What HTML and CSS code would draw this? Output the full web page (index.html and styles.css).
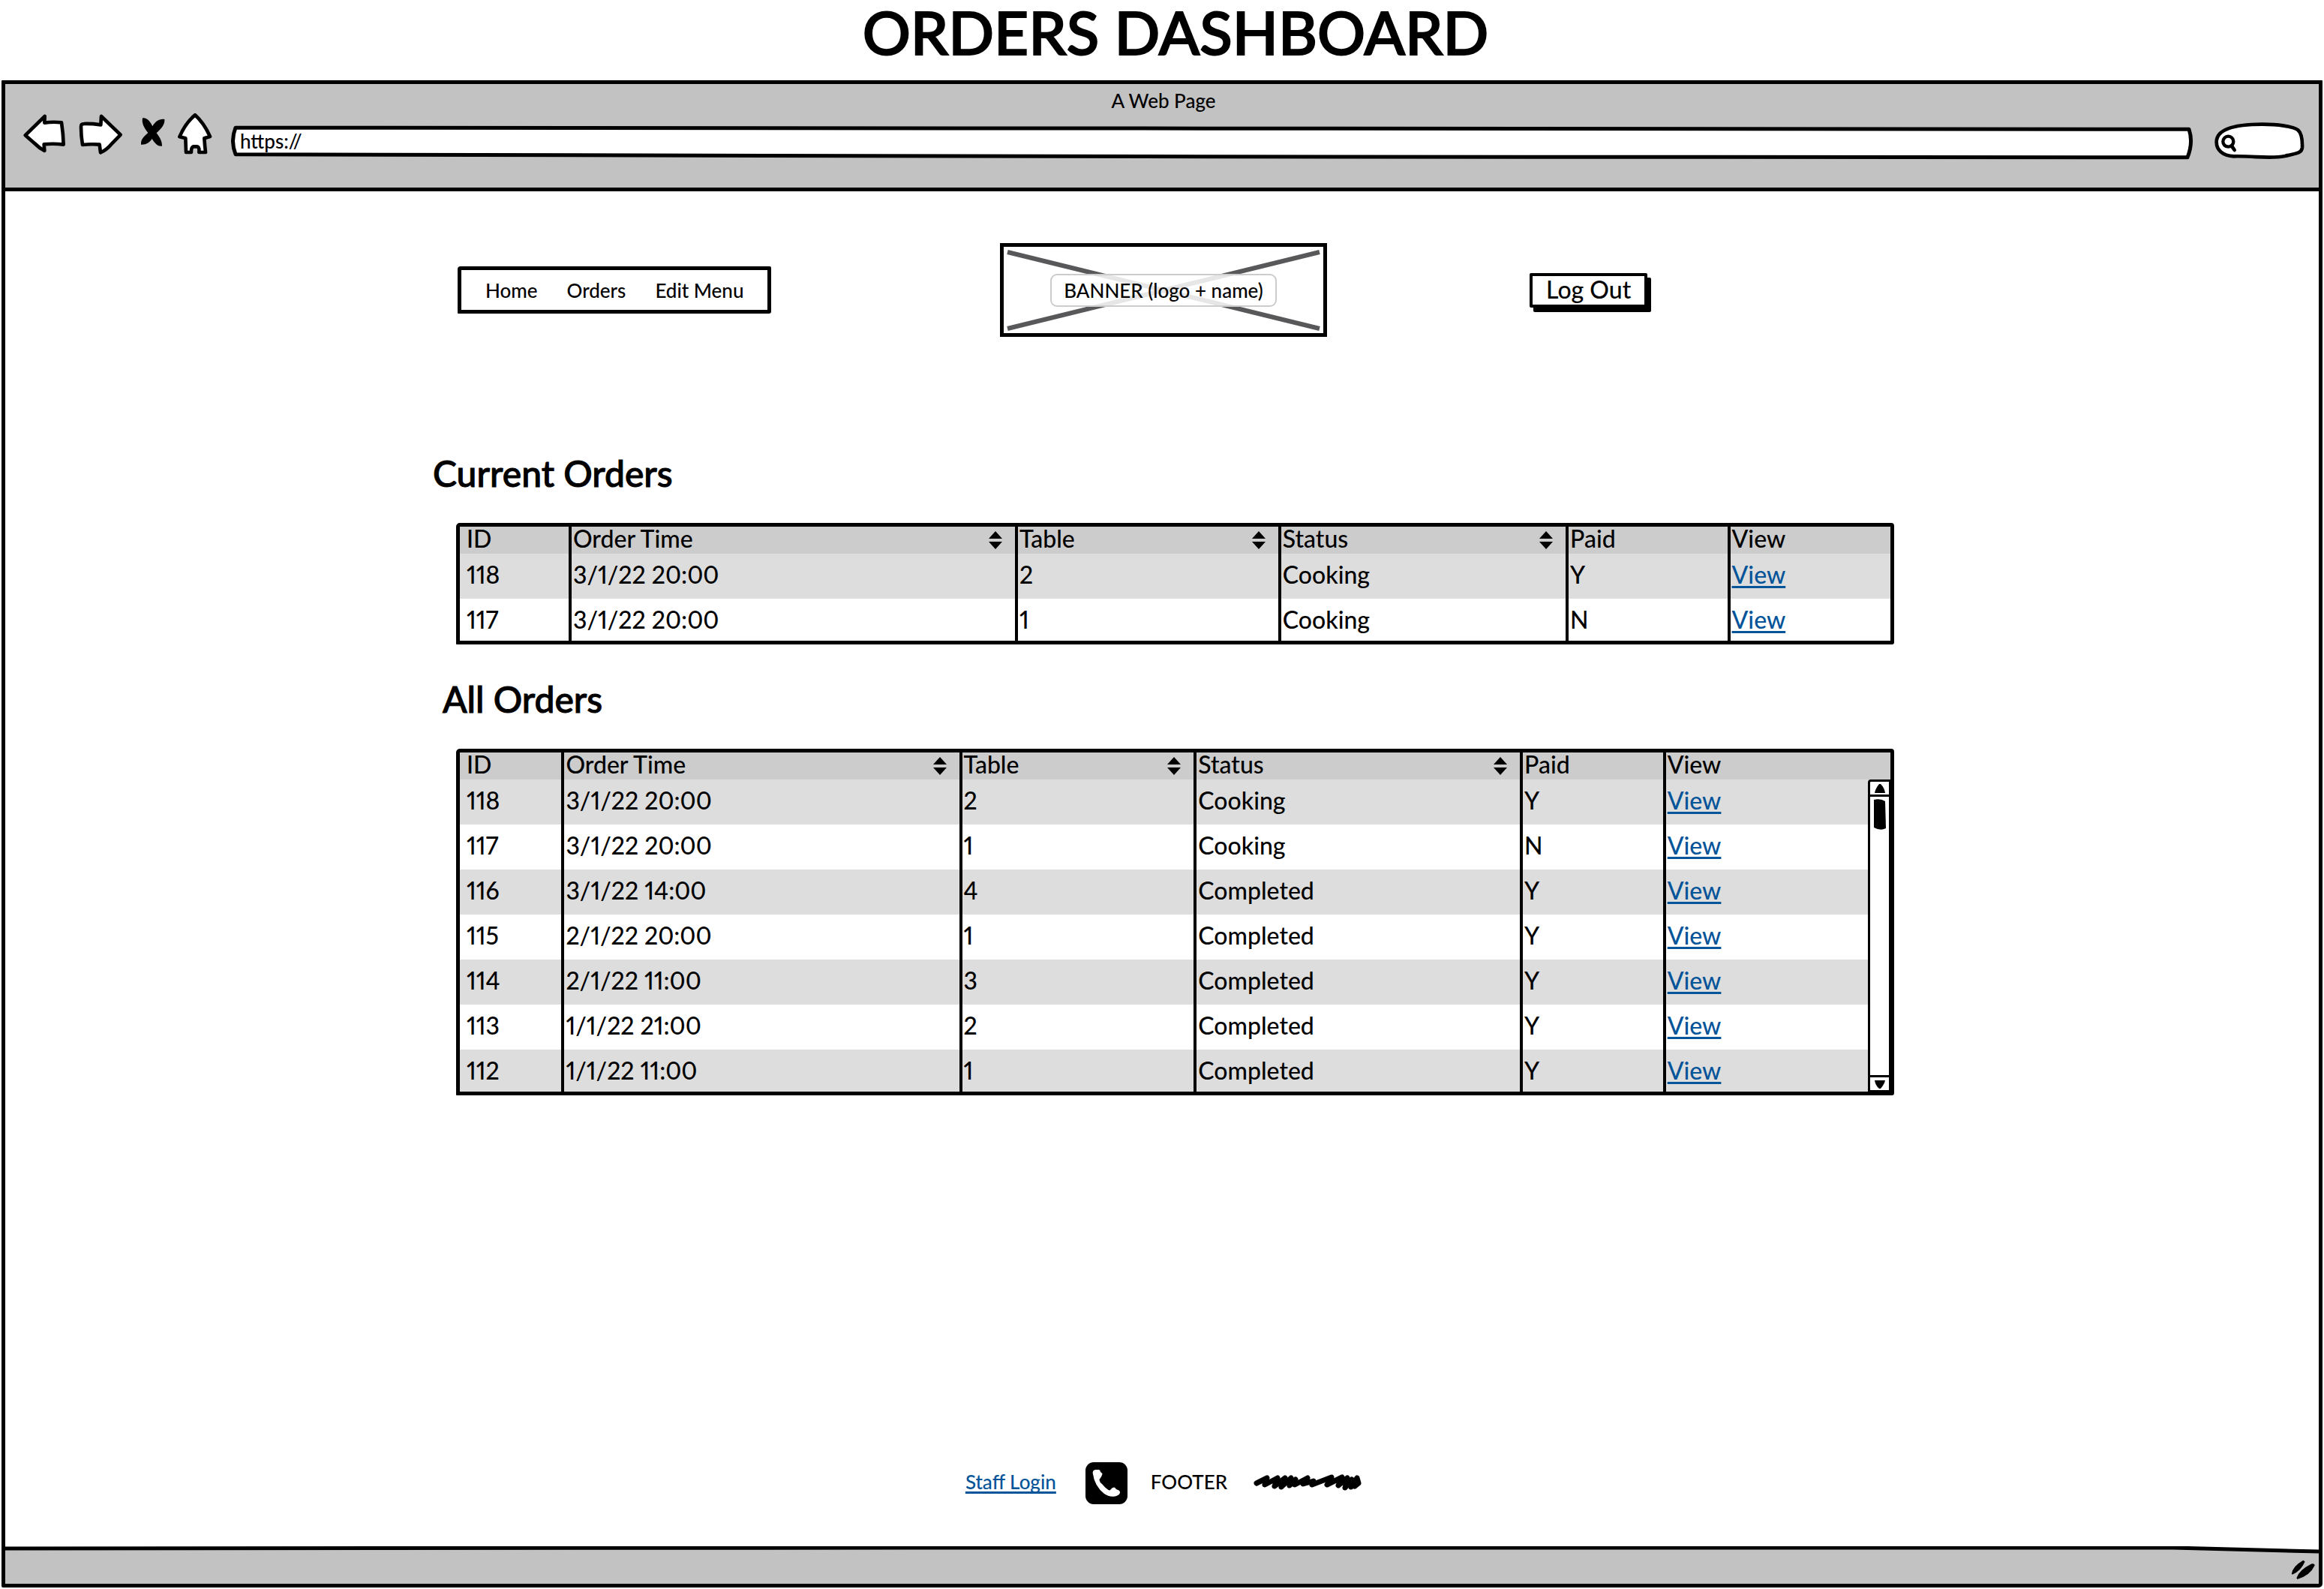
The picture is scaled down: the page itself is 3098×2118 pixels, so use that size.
FILE: index.html
```html
<!DOCTYPE html>
<html lang="en">
<head>
<meta charset="utf-8">
<title>Orders Dashboard</title>
<link rel="stylesheet" href="styles.css">
</head>
<body>
<h1 class="page-title">ORDERS DASHBOARD</h1>
<div class="browser">
  <div class="chrome">
    <div class="chrome-title">A Web Page</div>
    <div class="toolbar">
      <button class="tool tool-back" aria-label="Back"><svg width="58" height="56" viewBox="90 186 174 168"><path class="ink" d="M101 274L179 198L178 224Q212 219 246 223Q253 268 254 311Q214 306 176 310L178 336Q158 326 138 306Z"/></svg></button>
      <button class="tool tool-forward" aria-label="Forward"><svg width="60" height="56" viewBox="312 186 180 168"><path class="ink" d="M482 272L405 198L403 232Q365 227 336 228Q323 228 324 240Q324 275 330 312Q364 308 398 311L402 343Q425 333 444 311Z"/></svg></button>
      <button class="tool tool-stop" aria-label="Stop"><svg width="33" height="56" viewBox="561 186 99 168"><path d="M570 205C588 202 602 220 610 238C620 218 640 206 658 210C660 232 644 248 626 265C640 284 648 296 648 317C630 320 617 303 608 288C598 304 582 313 564 311C563 290 574 280 592 264C576 244 566 226 570 205Z"/></svg></button>
      <button class="tool tool-home" aria-label="Home"><svg width="47" height="56" viewBox="708 186 141 168"><path class="ink" d="M780 193Q815 224 840 279L817 286Q819 315 822 342L796 342Q798 320 788 319L774 319Q764 322 765 342L744 342L742 286L718 280Q742 224 780 193Z"/></svg></button>
      <div class="address">
        <svg class="backdrop" viewBox="0 0 2617 44" preserveAspectRatio="none"><path class="ink-wide" d="M6 3L1300 4L2611 5Q2617 22 2609 41L1300 40L6 37Q-1 20 6 3Z"/></svg>
        <input class="address-input" type="text" aria-label="Address" value="https://">
      </div>
      <div class="search">
        <svg class="backdrop" viewBox="278 219 360 150"><path class="ink" d="M286 298C286 250 350 227 470 227C530 227 590 235 612 250C625 262 630 290 629 320C627 345 600 343 560 354C500 366 440 353 355 355C310 352 286 330 286 298Z"/><circle class="lens" cx="333" cy="296" r="21"/><path class="ink" d="M347 314L358 330"/></svg>
        <input class="search-input" type="search" aria-label="Search">
      </div>
    </div>
  </div>

  <div class="page">
    <header class="site-header">
      <nav class="menu">
        <a href="#home">Home</a>
        <a href="#orders">Orders</a>
        <a href="#menu">Edit Menu</a>
      </nav>
      <div class="banner">
        <svg class="backdrop" viewBox="0 0 425 115" preserveAspectRatio="none"><path class="cross" d="M5 7L420 109M5 109L420 7"/></svg>
        <span class="banner-label">BANNER (logo + name)</span>
      </div>
      <button class="logout">Log Out</button>
    </header>

    <main class="content">
      <h2 class="heading" id="current">Current Orders</h2>
      <div class="grid-frame">
        <table class="orders" aria-labelledby="current">
          <colgroup><col class="c-id"><col class="c-time"><col class="c-table"><col class="c-status"><col class="c-paid"><col></colgroup>
          <thead><tr>
            <th>ID</th>
            <th class="sortable">Order Time<svg class="sort" viewBox="0 0 18 24"><path d="M9 0L18 10H0ZM0 14H18L9 24Z"/></svg></th>
            <th class="sortable">Table<svg class="sort" viewBox="0 0 18 24"><path d="M9 0L18 10H0ZM0 14H18L9 24Z"/></svg></th>
            <th class="sortable">Status<svg class="sort" viewBox="0 0 18 24"><path d="M9 0L18 10H0ZM0 14H18L9 24Z"/></svg></th>
            <th>Paid</th><th>View</th>
          </tr></thead>
          <tbody>
            <tr><td>118</td><td>3/1/22 20:00</td><td>2</td><td>Cooking</td><td>Y</td><td><a class="link" href="#118">View</a></td></tr>
            <tr><td>117</td><td>3/1/22 20:00</td><td>1</td><td>Cooking</td><td>N</td><td><a class="link" href="#117">View</a></td></tr>
          </tbody>
        </table>
      </div>

      <h2 class="heading heading-all" id="all">All Orders</h2>
      <div class="grid-frame">
        <table class="orders orders-all" aria-labelledby="all">
          <colgroup><col class="c-id"><col class="c-time"><col class="c-table"><col class="c-status"><col class="c-paid"><col></colgroup>
          <thead><tr>
            <th>ID</th>
            <th class="sortable">Order Time<svg class="sort" viewBox="0 0 18 24"><path d="M9 0L18 10H0ZM0 14H18L9 24Z"/></svg></th>
            <th class="sortable">Table<svg class="sort" viewBox="0 0 18 24"><path d="M9 0L18 10H0ZM0 14H18L9 24Z"/></svg></th>
            <th class="sortable">Status<svg class="sort" viewBox="0 0 18 24"><path d="M9 0L18 10H0ZM0 14H18L9 24Z"/></svg></th>
            <th>Paid</th><th>View</th>
          </tr></thead>
          <tbody>
            <tr><td>118</td><td>3/1/22 20:00</td><td>2</td><td>Cooking</td><td>Y</td><td><a class="link" href="#118">View</a></td></tr>
            <tr><td>117</td><td>3/1/22 20:00</td><td>1</td><td>Cooking</td><td>N</td><td><a class="link" href="#117">View</a></td></tr>
            <tr><td>116</td><td>3/1/22 14:00</td><td>4</td><td>Completed</td><td>Y</td><td><a class="link" href="#116">View</a></td></tr>
            <tr><td>115</td><td>2/1/22 20:00</td><td>1</td><td>Completed</td><td>Y</td><td><a class="link" href="#115">View</a></td></tr>
            <tr><td>114</td><td>2/1/22 11:00</td><td>3</td><td>Completed</td><td>Y</td><td><a class="link" href="#114">View</a></td></tr>
            <tr><td>113</td><td>1/1/22 21:00</td><td>2</td><td>Completed</td><td>Y</td><td><a class="link" href="#113">View</a></td></tr>
            <tr><td>112</td><td>1/1/22 11:00</td><td>1</td><td>Completed</td><td>Y</td><td><a class="link" href="#112">View</a></td></tr>
          </tbody>
        </table>
        <div class="scrollbar">
          <button class="scroll-step" aria-label="Scroll up"><svg width="16" height="12" viewBox="0 0 16 12"><path d="M7 0H9Q14 5 15 12H1Q2 6 7 0Z"/></svg></button>
          <div class="scroll-track"><svg width="16" height="41" viewBox="0 0 16 41"><path d="M0 1Q9 -1 15 3L16 39Q9 43 0 38Z"/></svg></div>
          <button class="scroll-step scroll-down" aria-label="Scroll down"><svg width="16" height="12" viewBox="0 0 16 12"><path d="M1 1H15Q14 6 9 12H7Q2 8 1 1Z"/></svg></button>
        </div>
      </div>
    </main>

    <footer class="site-footer">
      <a class="link" href="#staff">Staff Login</a>
      <svg class="phone" width="56" height="56" viewBox="0 0 56 56"><rect width="56" height="56" rx="11"/><path fill="#fff" d="M9.600 14Q10 10 14 10H18Q19.500 10 20 13L22.600 15.300Q22 19 18.400 23.300Q19 27 22 29Q26 34 30.600 37Q32 38 33.500 36.500Q36 33 39 33.700L41 36L45 37.700Q47 40 45.500 42Q42 46 36.400 45.700Q30 45.500 25 42Q12 32 9.600 14Z"/></svg>
      <span>FOOTER</span>
      <svg class="scribble" width="144" height="22" viewBox="0 0 144 22"><path d="M4 12L18 5L15 14L32 5L28 16L42 5L37 17L50 5L48 15L56 7L55 14L72 5L66 13L80 9L78 14L104 4L98 14L118 4L113 15L125 5L122 18L131 7L130 17L138 5L140 12L135 16"/></svg>
    </footer>
  </div>

  <div class="status">
    <svg class="backdrop" viewBox="0 0 3084 50" preserveAspectRatio="none"><path fill="#c2c2c2" d="M0 2L1200 1L2890 2L3084 7V50H0Z"/><path class="status-line" d="M0 3Q500 4 1200 2L2890 2L3084 7"/></svg>
    <svg class="grip" width="34" height="28" viewBox="460 145 102 85"><path d="M465 205Q468 175 512 150L519 156Q502 195 468 208ZM485 222Q495 190 545 165Q556 162 559 170Q540 212 488 227Z"/></svg>
  </div>
</div>
</body>
</html>
```
FILE: styles.css
```css
* {
  box-sizing: border-box;
}

body {
  margin: 0;
  min-height: 100vh;
  padding: 0 2px 2px;
  display: flex;
  flex-direction: column;
  background: #fff;
  color: #000;
  font-family: Lato, "Liberation Sans", sans-serif;
  font-size: 26px;
  font-weight: 500;
  font-variant-numeric: proportional-nums;
  line-height: 32px;
}

button,
input {
  font: inherit;
  color: inherit;
  border: 0;
  padding: 0;
  background: none;
}

svg {
  display: block;
}

.page-title {
  margin: 0;
  padding: 0 0 23px 36px;
  font-size: 80px;
  line-height: 84px;
  font-weight: 500;
  text-align: center;
  -webkit-text-stroke: 2px currentColor;
}

.browser {
  flex: 1;
  display: flex;
  flex-direction: column;
  border: 5px solid #000;
  border-radius: 1px 1px 5px 2px;
}

.chrome {
  padding: 6px 19px 37px 23px;
  background: #c2c2c2;
  border-bottom: 5px solid #000;
}

.chrome-title {
  text-align: center;
}

.toolbar {
  display: flex;
  align-items: flex-end;
  height: 63px;
}

.tool {
  margin: 0 16px 6px 0;
}

.tool-forward {
  margin-right: 23px;
}

.tool-home {
  margin-right: 25px;
}

.ink {
  fill: #fff;
  stroke: #000;
  stroke-width: 14;
  stroke-linejoin: round;
  stroke-linecap: round;
}

.ink-wide {
  fill: #fff;
  stroke: #000;
  stroke-width: 5;
  stroke-linejoin: round;
  vector-effect: non-scaling-stroke;
}

.lens {
  fill: #fff;
  stroke: #000;
  stroke-width: 13;
}

.backdrop {
  position: absolute;
  inset: 0;
  width: 100%;
  height: 100%;
}

.address {
  position: relative;
  flex: 1;
  height: 46px;
  margin-right: 28px;
}

.address-input {
  position: relative;
  width: 100%;
  height: 42px;
  padding-left: 12px;
}

.search {
  position: relative;
  width: 120px;
  height: 50px;
}

.search-input {
  position: relative;
  width: 100%;
  height: 50px;
  padding-left: 32px;
}

.page {
  flex: 1;
  display: grid;
  grid-template-columns: 570fr 1948fr 566fr;
  grid-template-rows: auto auto 1fr;
  padding-top: 69px;
}

.site-header {
  grid-column: 2;
  margin-left: 33px;
  display: grid;
  grid-template-columns: 723fr 706fr 486fr;
  justify-items: start;
  align-items: center;
}

.menu {
  display: flex;
  gap: 39px;
  padding: 11px 32px 10px;
  border: 5px solid #000;
  border-radius: 4px 2px 3px 1px;
}

.menu a {
  color: inherit;
  text-decoration: none;
}

.banner {
  position: relative;
  width: 436px;
  height: 125px;
  display: flex;
  align-items: center;
  justify-content: center;
  border: 5px solid #000;
}

.cross {
  fill: none;
  stroke: #58585a;
  stroke-width: 6;
}

.banner-label {
  position: relative;
  padding: 4px 16px;
  border: 2px solid #ccc;
  border-radius: 9px;
  background: rgba(255, 255, 255, 0.85);
}

.logout {
  padding: 1px 18px 3px;
  border: 4px solid #000;
  border-radius: 2px;
  background: #fff;
  box-shadow: 5px 6px 0 #000;
  font-size: 32px;
  line-height: 34px;
}

.content {
  grid-column: 2;
  padding-top: 153px;
}

.heading {
  margin: 0 0 37px;
  font-size: 48px;
  line-height: 58px;
  font-weight: 500;
  -webkit-text-stroke: 1px currentColor;
}

.heading-all {
  margin-top: 44px;
  padding-left: 13px;
}

.grid-frame {
  position: relative;
  margin-left: 31px;
  border: 5px solid #000;
  border-radius: 5px 4px 3px 1px;
}

.orders {
  width: 100%;
  table-layout: fixed;
  border-collapse: separate;
  border-spacing: 0;
  font-size: 32px;
}

.c-id { width: 7.6%; }
.c-time { width: 31.2%; }
.c-table { width: 18.4%; }
.c-status { width: 20.1%; }
.c-paid { width: 11.3%; }

.orders-all .c-id { width: 7.1%; }
.orders-all .c-time { width: 27.8%; }
.orders-all .c-table { width: 16.4%; }
.orders-all .c-status { width: 22.8%; }
.orders-all .c-paid { width: 10%; }

.orders th,
.orders td {
  padding: 0 0 4px 2px;
  border-left: 4px solid #000;
  text-align: left;
  font-weight: 500;
  line-height: 56px;
}

.orders th {
  line-height: 32px;
  background: #ccc;
}

.orders th:first-child,
.orders td:first-child {
  padding-left: 9px;
  border-left: 0;
}

.orders tbody tr:nth-child(odd) {
  background: #ddd;
}

.orders tbody tr:last-child td {
  padding-bottom: 0;
}

.sort {
  float: right;
  width: 18px;
  height: 24px;
  margin: 6px 17px 0 0;
}

.link {
  color: #045499;
  text-decoration: underline;
  text-decoration-thickness: 3px;
  text-underline-offset: 3px;
  text-decoration-skip-ink: none;
}

.scrollbar {
  position: absolute;
  top: 36px;
  right: -3px;
  bottom: -1px;
  width: 33px;
  display: flex;
  flex-direction: column;
  border: 3px solid #000;
  border-right-width: 5px;
  border-radius: 4px 2px 0 0;
  background: #fff;
}

.scroll-step {
  display: grid;
  place-items: center;
  height: 20px;
  border-bottom: 3px solid #000;
}

.scroll-down {
  border-top: 3px solid #000;
  border-bottom: 0;
}

.scroll-track {
  flex: 1;
  display: flex;
  justify-content: center;
  padding-top: 3px;
}

.site-footer {
  grid-column: 2;
  align-self: end;
  justify-self: center;
  display: flex;
  align-items: flex-start;
  padding-bottom: 56px;
  line-height: 52px;
}

.phone {
  margin: 0 31px 0 39px;
}

.scribble {
  margin: 16px 0 0 35px;
}

.scribble path {
  fill: none;
  stroke: #000;
  stroke-width: 7;
  stroke-linejoin: round;
  stroke-linecap: round;
}

.status {
  position: relative;
  height: 50px;
  display: flex;
  justify-content: flex-end;
  align-items: flex-end;
  padding: 0 4px 5px 0;
}

.status-line {
  fill: none;
  stroke: #000;
  stroke-width: 5;
  vector-effect: non-scaling-stroke;
}

.grip {
  position: relative;
}
```
